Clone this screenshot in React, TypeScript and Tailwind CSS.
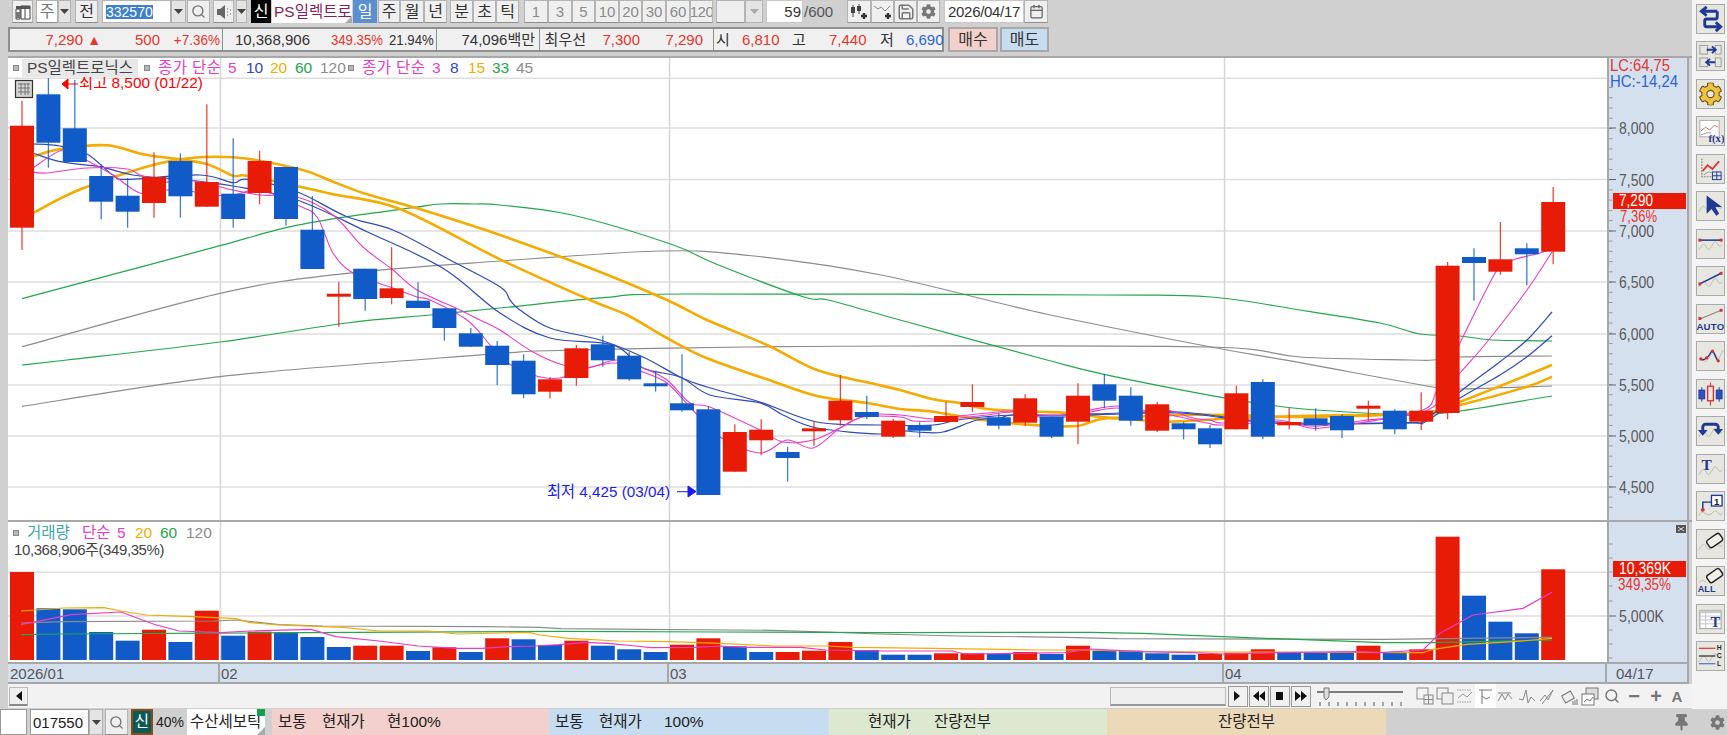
import React from "react";
import { Search, Save, Calendar } from "lucide-react";
import { FaCog, FaThumbtack } from "react-icons/fa";

type C = [number, number, number, number, "r" | "b"];
const candles: C[] = [
  [125.7,227.7,100.7,250,"r"],[94.3,142.7,78,167.7,"b"],[128.3,162,80,162,"b"],[176,201.7,164,219.3,"b"],[195.7,211.7,178,227.7,"b"],
  [177,203,152.3,217.7,"r"],[161,196.3,153.3,217.7,"b"],[182,206.7,104.3,206.7,"r"],[193.7,219,138.3,227.7,"b"],[161,193,150.7,204.3,"r"],
  [167,219,167,225.7,"b"],[229.7,269,196,269,"b"],[293.7,296.7,282.3,326.7,"r"],[268.7,299,268.7,310.7,"b"],[288.3,298,247.3,304.3,"r"],
  [300.7,308,282.3,308,"b"],[308.3,328,308.3,340.7,"b"],[333.3,346.7,328,346.7,"b"],[345.7,365,341,385,"b"],[360.7,394.3,354.3,398.3,"b"],
  [379.3,391.7,377.3,398.3,"r"],[348.3,378,345,385.7,"r"],[344.3,360.3,335.7,366.7,"b"],[355.7,379.3,351.7,380.7,"b"],[383.3,385.3,370.7,391.7,"b"],
  [403.3,410.3,354.3,411.7,"b"],[409.3,495,406,495,"b"],[432,471.7,424.3,471.7,"r"],[429.7,440.3,419.3,455.3,"r"],[452,458,447,481.7,"b"],
  [428.3,430.3,421,445.7,"r"],[400.7,420.3,375,425.7,"r"],[412,417,395.7,419,"b"],[420.7,436.7,419,438,"r"],[425,430.7,422.3,437.3,"b"],
  [416,422,401.7,422,"r"],[402,407,384.3,412,"r"],[417.3,425.7,413.3,429.3,"b"],[398.3,422.7,394.3,425.7,"r"],[416.7,436.7,416.7,438,"b"],
  [395.7,421.7,383.3,444.3,"r"],[384.3,400.7,374,408.3,"b"],[395.7,420.7,387.3,425.7,"b"],[404.3,430.7,402,432,"r"],[423.3,429.3,422,439.3,"b"],
  [428.3,444.3,425,448,"b"],[393.3,429.3,385.7,429.3,"r"],[382,436.7,379.3,439.3,"b"],[422,425.3,407.7,429.3,"r"],[418.3,425.3,408.3,430.7,"b"],
  [416,430.3,414.3,438,"b"],[405.7,408,400.7,420.7,"r"],[410.7,429.3,409.3,434.3,"b"],[410.7,421.7,392.3,430,"r"],[265.7,413,262,419.3,"r"],
  [257,263,248.3,300.7,"b"],[259.3,271.7,222,274.7,"r"],[248.3,254.3,243.3,285.3,"b"],[202,251.7,187,264.3,"r"],
];
const vols: [number, "r" | "b"][] = [
  [572,"r"],[608.3,"b"],[609.3,"b"],[632,"b"],[640.7,"b"],[629.7,"r"],[642,"b"],[610.7,"r"],[635.7,"b"],[631.7,"r"],
  [632,"b"],[637,"b"],[647,"b"],[645.7,"r"],[645.7,"r"],[651,"b"],[647.3,"r"],[652,"b"],[638.3,"r"],[639.3,"b"],
  [645,"b"],[640.7,"r"],[645.7,"b"],[649.3,"b"],[652,"b"],[644.7,"r"],[638.3,"r"],[646.3,"b"],[652,"b"],[652,"r"],
  [650.7,"r"],[642,"r"],[650,"b"],[654.7,"b"],[654.7,"b"],[653.3,"r"],[653.3,"r"],[654,"b"],[652,"r"],[654,"b"],
  [645.7,"r"],[650.7,"b"],[650.7,"b"],[653.3,"b"],[654.7,"b"],[654,"r"],[652.7,"r"],[649.3,"r"],[652.7,"b"],[652.7,"b"],
  [652.7,"b"],[645.7,"r"],[652.7,"b"],[649.3,"r"],[536.7,"r"],[595.7,"b"],[621.7,"b"],[633.3,"b"],[569.3,"r"],
];
const cx = (i: number) => 22 + 26.4 * i;
const RED = "#e81b07";
const BLUE = "#115bc8";
const MAG = "#e83cc8";
const IND = "#2f49b8";
const ORG = "#f5ab00";
const GRN = "#22a84a";
const GRY = "#8c8c8c";

const pL = (a: number[][]) => a.map((p) => p.join(",")).join(" ");
const smooth = (p: number[][]) => {
  let d = `M${p[0][0]} ${p[0][1]}`;
  for (let i = 0; i < p.length - 1; i++) {
    const a = p[i - 1] || p[i];
    const b = p[i];
    const c = p[i + 1];
    const e = p[i + 2] || c;
    d += `C${(b[0] + (c[0] - a[0]) / 6).toFixed(1)} ${(b[1] + (c[1] - a[1]) / 6).toFixed(1)} ${(c[0] - (e[0] - b[0]) / 6).toFixed(1)} ${(c[1] - (e[1] - b[1]) / 6).toFixed(1)} ${c[0]} ${c[1]}`;
  }
  return d;
};

const priceLines: { c: string; w: number; p: number[][] }[] = [
  { c: GRY, w: 1.2, p: [[22,346.7],[220,293.3],[347,273.3],[500,261],[661,251],[749,255.5],[881,275],[1046,314],[1211,347],[1300,362.7],[1433,387],[1460,389],[1552,386]] },
  { c: GRY, w: 1.2, p: [[22,406.4],[220,376.7],[440,358],[510,352.7],[537,351],[640,348.7],[747,347],[900,346],[1211,347],[1300,357],[1410,360],[1433,360],[1460,357],[1552,356]] },
  { c: GRN, w: 1.2, p: [[22,298.7],[127,270.7],[220,245.7],[286,227.7],[347,216.7],[413,207.7],[440,204],[473,204],[500,205],[572,215],[672,244.5],[716,264],[804,297],[828,300],[900,320],[1047,360],[1104,374.3],[1223,397.7],[1277,406],[1317,410],[1383,414],[1420,415],[1460,411],[1552,396]] },
  { c: GRN, w: 1.2, p: [[22,365],[67,360],[220,342],[347,323],[430,315],[500,308],[606,297.4],[683,294],[1101,295],[1211,297],[1300,310],[1380,323],[1420,334],[1460,336],[1493,340],[1552,341]] },
  { c: ORG, w: 2.6, p: [[33,156.7],[60,149],[107,145.3],[147,155],[203,163],[233,175.7],[247,175.7],[300,186.7],[333,194.3],[400,209],[500,259.3],[590,300],[627,315],[667,338],[707,358.3],[767,379.3],[817,396],[867,403],[900,409],[933,411.7],[983,420],[1033,425],[1077,426],[1107,418.3],[1167,421.7],[1233,418.3],[1300,416],[1420,413],[1460,401.7],[1552,365]] },
  { c: ORG, w: 2.6, p: [[33,213],[83,188.3],[167,161.7],[233,157.3],[300,169.3],[333,181.7],[367,194.3],[417,208.3],[500,235],[590,268],[667,300],[707,320],[767,345],[817,370],[867,382.3],[900,390],[933,399.3],[960,403],[990,409.3],[1040,411.7],[1067,413],[1113,417.7],[1167,415],[1233,415],[1300,417],[1420,413],[1460,405],[1527,386.7],[1552,376.7]] },
  { c: IND, w: 1.2, p: [[33,144],[60,146],[87,154],[113,175],[127,179.3],[200,175],[233,182.7],[247,179.3],[297,191.7],[347,216.7],[393,230],[450,260],[500,286.7],[510,300],[520,310],[550,328],[600,340],[643,357],[682,378],[707,387],[760,402],[817,422],[880,425],[933,425],[957,420],[983,417],[1013,415],[1060,415],[1120,413],[1180,412],[1250,420],[1300,423],[1410,422.7],[1425,420],[1460,391.7],[1500,361.7],[1527,340],[1552,312]] },
  { c: IND, w: 1.2, p: [[33,153],[60,161.7],[100,166.7],[133,175],[187,180],[233,186],[297,200],[367,231.7],[443,268.3],[500,313],[550,338],[613,345],[643,368],[680,377],[710,395],[760,403],[783,415],[817,428],[880,434],[900,430.7],[917,432],[943,432],[977,420],[1000,418],[1013,415],[1060,416],[1120,414],[1180,413],[1250,421],[1300,424],[1410,423],[1425,422],[1460,398],[1500,375],[1527,356.7],[1552,335.7]] },
  { c: MAG, w: 1.1, p: [[33,168],[63,150],[86,160],[113,175],[140,193],[165,190],[190,191],[207,195],[233,195],[260,190],[297,205],[317,217],[333,253],[353,273],[390,287],[417,297],[430,300],[467,320],[490,345],[500,358],[533,375],[560,378],[587,368],[617,363],[643,372],[667,383],[690,407],[720,437],[760,453],[787,440],[813,448],[840,428],[863,417],[900,417],[913,421],[933,421],[960,418],[987,415],[1013,412],[1040,417],[1067,417],[1090,412],[1117,408],[1143,412],[1167,410],[1193,418],[1210,420],[1223,423],[1277,420],[1310,428],[1330,427],[1360,423],[1423,410],[1437,390],[1460,343],[1497,270],[1513,260],[1540,253],[1552,248]] },
  { c: MAG, w: 1.1, p: [[33,172],[47,173],[87,168],[127,169],[140,175],[165,182],[190,180],[233,190],[260,195],[297,197],[333,215],[363,247],[393,270],[417,290],[460,310],[480,320],[500,330],[533,352],[563,365],[587,368],[617,360],[643,368],[667,380],[690,403],[710,407],[760,430],[783,442],[813,440],[840,428],[867,415],[900,415],[933,419],[960,416],[987,413],[1013,411],[1040,415],[1067,415],[1090,410],[1117,406],[1143,410],[1180,417],[1207,423],[1223,425],[1277,422],[1310,426],[1330,425],[1360,421],[1428,410],[1460,373],[1487,342],[1527,290],[1552,252]] },
];
const volLines: { c: string; p: number[][] }[] = [
  { c: GRY, p: [[21,623],[64,621.7],[214,621],[236,620],[279,624.7],[323,626],[484,626.7],[540,627.3],[561,628.7],[642,629.3],[772,630.3],[827,632],[879,634],[958,636],[1065,637.3],[1117,638.7],[1383,639.3],[1552,637.3]] },
  { c: GRN, p: [[21,634.7],[61,634],[557,631.3],[719,632],[879,632.7],[1090,632.3],[1143,633.3],[1197,635.7],[1303,639.7],[1383,642.7],[1433,642.7],[1552,640]] },
  { c: ORG, p: [[21,611],[64,608],[104,607.7],[121,611],[146,615],[193,616.7],[236,618.7],[250,622.7],[279,625],[343,627.3],[379,631],[429,631],[457,634],[529,632.3],[540,635],[569,638.3],[617,641],[669,641.7],[720,643.3],[774,646],[826,646],[854,647.3],[933,648.3],[1038,650],[1090,650],[1143,651.7],[1223,652],[1423,652.7],[1433,649.3],[1467,644.3],[1513,641.7],[1552,638.3]] },
  { c: MAG, p: [[21,624.3],[36,621.7],[71,614.7],[121,612],[154,624.3],[179,631],[221,632.7],[250,631],[311,629.3],[336,636.7],[379,641],[418,646],[457,648.3],[482,648.3],[507,646.7],[536,646],[559,644.7],[586,642.3],[608,643.3],[636,646],[651,647.7],[694,647.3],[720,646],[747,647.3],[801,647.3],[826,650],[879,651],[952,651],[965,654],[1065,652.7],[1090,649],[1143,651.7],[1193,652.7],[1223,654],[1277,652.7],[1357,651.7],[1380,652.7],[1423,650],[1440,633.3],[1473,615],[1523,608.3],[1552,592.3]] },
];

const btn = "flex shrink-0 items-center justify-center border border-[#b4b4b4] border-b-[#8f8f8f] bg-[#efefef] h-full";
const dd = "flex shrink-0 items-center justify-center border border-[#b4b4b4] bg-[#e4e4e4] h-full";
const Caret = ({ c = "#444" }: { c?: string }) => (
  <svg width="9" height="5" viewBox="0 0 9 5"><path d="M0 0h9L4.5 5z" fill={c} /></svg>
);

const T = ({ x, y, w, fill, children }: { x: number; y: number; w: number; fill: string; children: string }) => (
  <text x={x} y={y} fontSize="16" fill={fill} textLength={w} lengthAdjust="spacingAndGlyphs">{children}</text>
);

const Axis = ({ ticks, labels }: { ticks: number[]; labels: [string, number, number][] }) => (
  <g>
    {ticks.map((y, i) => (
      <line key={i} x1="0" x2="3.5" y1={y} y2={y} stroke="#9a9a9a" strokeWidth="1" />
    ))}
    {labels.map(([t, y, w]) => (
      <g key={t}>
        <line x1="0" x2="7" y1={y} y2={y} stroke="#666" strokeWidth="1" />
        <T x={10} y={y + 6} w={w} fill="#5a5a5a">{t}</T>
      </g>
    ))}
  </g>
);

const Wave = () => <path d="M2 20c3-5 5-8 7-4s3 5 5 2 4-8 6-6 3 7 6 3" fill="none" stroke="#b8b8b0" strokeWidth="1" />;
const NAVY = "#1f3a93";
const tools: React.ReactNode[] = [
  <g key="1" fill="none" stroke={NAVY} strokeWidth="3">
    <path d="M21 6H6M10 1.500 4.500 6l5.500 4.500" />
    <path d="M21 6v6a2 2 0 0 1-2 2H10a2 2 0 0 0-2 2v4a2 2 0 0 0 2 2h14M19.500 17.500l5 4.500-5 4.500" />
  </g>,
  <g key="2">
    <g fill="#e6e6e0" stroke="#9a9a9a">
      <rect x="3" y="3" width="8" height="9" /><rect x="19" y="3" width="6" height="9" /><rect x="3" y="16" width="8" height="9" /><rect x="19" y="16" width="6" height="9" />
    </g>
    <path d="M10 7.500h9m-3.500-3.500 4 3.500-4 3.500M19 20.500h-9m3.500-3.500-4 3.500 4 3.500" stroke={NAVY} strokeWidth="2" fill="none" />
  </g>,
  <FaCog key="3" x="2" y="2" size={24} color="#f2c23c" stroke="#5e5326" strokeWidth={24} />,
  <g key="4">
    <rect x="3" y="3" width="20" height="17" fill="#fff" stroke="#aaa" />
    <path d="M4 14l5-4 4 3 5-5 4 2" fill="none" stroke="#e86060" strokeWidth="1" />
    <path d="M4 18l6-2 5 0" fill="none" stroke="#999" />
    <text x="12" y="25" fontSize="11" fontWeight="700" fill={NAVY} fontFamily="Liberation Serif">f(x)</text>
  </g>,
  <g key="5">
    <path d="M5 3v19h19" fill="none" stroke="#888" strokeWidth="1.200" strokeDasharray="2 1" />
    <path d="M6 16l5-6 5 4 7-8" fill="none" stroke="#d83030" strokeWidth="1.800" />
    <path d="M7 20l5-3 4 1" fill="none" stroke="#999" />
    <rect x="16" y="17" width="9" height="8" fill="#dde6f5" stroke={NAVY} /><path d="M20.500 17v8M16 21h9" stroke={NAVY} />
  </g>,
  <g key="6"><Wave /><path d="M10 3v19l5-5 5 7 3-2-4-7h7z" fill={NAVY} /></g>,
  <g key="7"><Wave /><path d="M3 10h22" stroke={NAVY} strokeWidth="1.600" /><rect x="1.500" y="8.500" width="3" height="3" fill="#d83030" /><rect x="23.500" y="8.500" width="3" height="3" fill="#d83030" /></g>,
  <g key="8"><Wave /><path d="M3 17L25 6" stroke={NAVY} strokeWidth="1.600" /><rect x="1.500" y="15.500" width="3" height="3" fill="#d83030" /><rect x="23.500" y="4.500" width="3" height="3" fill="#d83030" /></g>,
  <g key="9"><path d="M3 14l22-9" stroke="#888" strokeWidth="1.200" /><rect x="1.500" y="12" width="3" height="3" fill="#d83030" /><rect x="23.500" y="3.500" width="3" height="3" fill="#d83030" /><text x="14" y="25" fontSize="10" fontWeight="700" textAnchor="middle" fill={NAVY} letterSpacing="0.3">AUTO</text></g>,
  <g key="10"><path d="M3 17l6 3 4-5 4-6 5 9 5-10" fill="none" stroke="#bbb" /><path d="M4 17c3 3 5-1 7-2s3-6 5-6 3 8 6 10" fill="none" stroke={NAVY} strokeWidth="1.500" />{[[4,17],[10,16],[16,9],[22,19]].map(([x,y])=><circle key={x} cx={x} cy={y} r="1.700" fill="#d83030" />)}</g>,
  <g key="11"><path d="M5 7v15M23 7v15" stroke={NAVY} /><path d="M14 2v24" stroke="#d83030" /><rect x="2" y="10" width="6" height="9" fill="#3050c8" stroke={NAVY} /><rect x="20" y="10" width="6" height="9" fill="#3050c8" stroke={NAVY} /><rect x="11" y="6" width="6" height="15" fill="#f0e8e0" stroke="#d83030" strokeWidth="1.400" /></g>,
  <g key="12"><Wave /><path d="M6 16V10a3 3 0 0 1 3-3h10a3 3 0 0 1 3 3v4" fill="none" stroke={NAVY} strokeWidth="3" /><path d="M1 13h10l-5 6zM17 12h10l-5 6z" fill={NAVY} /></g>,
  <g key="13"><Wave /><text x="10" y="15" fontSize="16" fontWeight="700" textAnchor="middle" fill={NAVY} fontFamily="Liberation Serif">T</text></g>,
  <g key="14"><path d="M2 24c3-6 5-3 7-2s4 2 6 0 4-5 7-1 3 2 4 0" fill="none" stroke="#b8b8b0" /><path d="M6 18v-8h9" fill="none" stroke={NAVY} strokeWidth="1.500" /><circle cx="6" cy="18" r="2" fill="#d83030" /><rect x="15" y="3" width="11" height="11" fill="#fff" stroke={NAVY} strokeWidth="1.400" /><text x="20.500" y="12.500" fontSize="10" fontWeight="700" textAnchor="middle" fill="#222">1</text></g>,
  <g key="15"><Wave /><rect x="10" y="6" width="16" height="9" rx="2.500" transform="rotate(-35 18 10)" fill="#f2f0e8" stroke="#222" strokeWidth="1.500" /></g>,
  <g key="16"><rect x="10" y="4" width="16" height="9" rx="2.500" transform="rotate(-35 18 8)" fill="#f2f0e8" stroke="#222" strokeWidth="1.500" /><path d="M2 16c3-4 5-2 7-1" fill="none" stroke="#b8b8b0" /><text x="10" y="25" fontSize="9.500" fontWeight="700" textAnchor="middle" fill={NAVY}>ALL</text></g>,
  <g key="17"><rect x="3" y="5" width="22" height="19" fill="#fff" stroke="#999" /><path d="M3 5h22v3H3z" fill="#c8c8c8" /><path d="M3 11h22M3 15h22M3 19h22M9 8v16" stroke="#c4c4c4" /><text x="19" y="22" fontSize="15" fontWeight="700" textAnchor="middle" fill={NAVY} fontFamily="Liberation Serif">T</text></g>,
  <g key="18"><Wave /><path d="M2 6h17" stroke="#d83030" strokeWidth="1.200" /><path d="M2 14h17" stroke="#222" strokeWidth="1.200" /><path d="M2 22h17" stroke="#3a70d0" strokeWidth="1.200" /><text x="23" y="8" fontSize="7" fontWeight="700" textAnchor="middle" fill="#222">H</text><text x="23" y="16" fontSize="7" fontWeight="700" textAnchor="middle" fill="#222">C</text><text x="23" y="24" fontSize="7" fontWeight="700" textAnchor="middle" fill="#222">L</text></g>,
];

const Sq = () => <span className="inline-block size-[6px] shrink-0 border border-[#888] bg-[#b8b8b8]" />;

const tbIcon = "flex shrink-0 items-center justify-center w-[20px] h-[24px] text-[#777]";
const miniIcons: React.ReactNode[] = [
  <g key="a" fill="none" stroke="#888"><rect x="1" y="1" width="11" height="11" /><rect x="8" y="8" width="9" height="9" fill="#eee" /><path d="M12.500 8v9M8 12.500h9" /></g>,
  <g key="b" fill="none" stroke="#888"><rect x="1" y="1" width="11" height="11" /><rect x="6" y="6" width="11" height="11" fill="#eee" /></g>,
  <g key="c" fill="none" stroke="#999" strokeDasharray="1.500 1"><path d="M1 3h14M1 15h14" /><path d="M2 11l5-4 4 3 5-5" strokeDasharray="none" /></g>,
  <g key="d" fill="none" stroke="#777"><path d="M3 3h13M6 3v14M6 9l4 3 4-2" /></g>,
  <g key="e" fill="none" stroke="#888"><path d="M1 6h13M1 14l4-7 3 6 3-6 4 5" /></g>,
  <g key="f" fill="none" stroke="#888"><path d="M1 12l4 1 3-10 2 13 3-6 4 4" /></g>,
  <g key="g" fill="none" stroke="#888"><path d="M1 14l5-6 3 5 5-10M3 17l11-14" /></g>,
  <g key="h" fill="none" stroke="#777"><rect x="3" y="6" width="10" height="8" transform="rotate(-30 8 10)" fill="#eee" /><path d="M13 14v4M15 13v5M17 12v6" /></g>,
  <g key="i" fill="none" stroke="#777"><rect x="5" y="1" width="12" height="11" fill="#ddd" /><rect x="1" y="7" width="12" height="11" fill="#fff" /><path d="M3 15l3-3 3 2 3-4" /></g>,
];

export default function App() {
  return (
    <div className="flex h-[735px] w-[1727px] flex-col overflow-hidden bg-[#d0d0d0] font-['Liberation_Sans','Noto_Sans_CJK_KR',sans-serif] text-[#333]">
      <div className="flex h-[709px] shrink-0">
        {/* main column */}
        <div className="flex w-[1692px] shrink-0 flex-col">
          {/* row 1 */}
          <div className="flex h-[23px] shrink-0 items-stretch pl-[12px] text-[16px] leading-none">
            <div className={btn + " w-[21px]"}>
              <svg width="16" height="16" viewBox="0 0 16 16"><path d="M1 5h4v10H1zM6 2h9v13H6z" fill="#fff" stroke="#444" /><path d="M1 2h14v3H1z" fill="#555" /><path d="M1 8h4v6H1z" fill="#777" /><path d="M10 5v10" stroke="#444" /></svg>
            </div>
            <div className={btn + " ml-[3px] w-[22px] bg-white text-[#777]"}>주</div>
            <div className={dd + " w-[13px]"}><Caret /></div>
            <div className={btn + " ml-[4px] w-[23px]"}>전</div>
            <div className="ml-[4px] flex h-full w-[69px] shrink-0 items-center border border-[#b4b4b4] bg-white pl-[3px]">
              <span className="bg-[#3d7fd0] text-[14px] text-white">332570</span>
            </div>
            <div className={dd + " w-[15px]"}><Caret /></div>
            <div className={btn + " ml-[1px] w-[23px]"}><Search size={15} color="#777" strokeWidth={2.2} /></div>
            <div className={btn + " ml-[3px] w-[21px]"}>
              <svg width="16" height="14" viewBox="0 0 16 14"><path d="M1 4h3l5-4v14L4 10H1z" fill="#666" /><path d="M11 4h1M11 7h1M11 10h1M14 5h1M14 9h1" stroke="#666" /></svg>
            </div>
            <div className={dd + " ml-[2px] w-[11px]"}><Caret /></div>
            <div className="ml-[4px] flex h-full w-[20px] shrink-0 items-center justify-center bg-black text-white">신</div>
            <div className="relative ml-[1px] flex h-full w-[80px] shrink-0 items-center overflow-hidden whitespace-nowrap bg-white pl-[2px] text-[15.500px] text-[#8a1a5e]">
              PS일렉트로
              <span className="absolute bottom-0 right-0 size-0 border-b-[7px] border-l-[7px] border-b-[#aaa] border-l-transparent" />
            </div>
            <div className="ml-[1px] flex h-full w-[24px] shrink-0 items-center justify-center bg-[#5b8fcf] text-white">일</div>
            <div className={btn + " ml-[1px] w-[22px]"}>주</div>
            <div className={btn + " w-[24px]"}>월</div>
            <div className={btn + " w-[23px]"}>년</div>
            <div className={btn + " ml-[3px] w-[23px]"}>분</div>
            <div className={btn + " w-[23px]"}>초</div>
            <div className={btn + " w-[23px]"}>틱</div>
            <div className="ml-[5px] flex h-full text-[15px] text-[#8a8a8a]">
              <div className={btn + " w-[24px]"}>1</div>
              <div className={btn + " w-[24px]"}>3</div>
              <div className={btn + " w-[23px]"}>5</div>
              <div className={btn + " w-[24px]"}>10</div>
              <div className={btn + " w-[23px]"}>20</div>
              <div className={btn + " w-[24px]"}>30</div>
              <div className={btn + " w-[24px]"}>60</div>
              <div className={btn + " w-[23px] overflow-hidden tracking-[-0.5px]"}>120</div>
            </div>
            <div className={btn + " ml-[3px] w-[29px]"} />
            <div className={dd + " w-[18px]"}><Caret c="#aaa" /></div>
            <div className="ml-[3px] flex h-full w-[37px] shrink-0 items-center justify-end border border-[#c8c8c8] bg-white pr-[1px] text-[15px]">59</div>
            <div className="flex w-[44px] shrink-0 items-center pl-[1px] text-[15px] text-[#555]">/600</div>
            <div className={btn + " w-[24px]"}>
              <svg width="18" height="16" viewBox="0 0 18 16" fill="#444"><path d="M3 1v12M9 0v10" stroke="#444" /><rect x="1" y="3" width="4" height="6" /><rect x="7" y="2" width="4" height="5" /><path d="M14 9v6M11 12h6" stroke="#333" strokeWidth="2.400" /></svg>
            </div>
            <div className={btn + " w-[23px]"}>
              <svg width="18" height="16" viewBox="0 0 18 16" fill="none"><path d="M0 2l4 3 3-2 4 4 5-5" stroke="#888" /><path d="M14 9v6M11 12h6" stroke="#333" strokeWidth="2.400" /></svg>
            </div>
            <div className={btn + " w-[23px]"}><Save size={18} color="#777" strokeWidth={2} /></div>
            <div className={btn + " w-[23px]"}><FaCog size={15} color="#777" /></div>
            <div className="ml-[4px] flex h-full w-[80px] shrink-0 items-center border border-[#c8c8c8] bg-white pl-[3px] text-[15px] tracking-[-0.3px]">2026/04/17</div>
            <div className={btn + " w-[24px]"}><Calendar size={15} color="#666" strokeWidth={2} /></div>
          </div>

          {/* row 2 */}
          <div className="ml-[8px] mt-[4px] flex h-[25px] shrink-0 text-[15px] leading-none">
            <div className="flex h-full w-[936px] items-stretch border-2 border-[#8f8f8f] bg-[#f0f0f0]">
              <div className="flex w-[213px] shrink-0 items-center border-r border-[#8f8f8f] text-[#e8352a]">
                <span className="w-[73px] text-right">7,290</span>
                <span className="w-[18px] text-right text-[14px]">▲</span>
                <span className="w-[59px] text-right">500</span>
                <span className="w-[60px] origin-right scale-x-[.9] whitespace-nowrap text-right">+7.36%</span>
              </div>
              <div className="flex w-[214px] shrink-0 items-center border-r border-[#8f8f8f]">
                <span className="w-[87px] text-right">10,368,906</span>
                <span className="w-[73px] origin-right scale-x-[.88] whitespace-nowrap text-right text-[#e8352a]">349.35%</span>
                <span className="w-[50px] origin-right scale-x-[.88] whitespace-nowrap text-right">21.94%</span>
              </div>
              <div className="flex w-[103px] shrink-0 items-center border-r border-[#8f8f8f]">
                <span className="w-[98px] whitespace-nowrap text-right">74,096백만</span>
              </div>
              <div className="flex w-[174px] shrink-0 items-center border-r border-[#8f8f8f]">
                <span className="w-[46px] whitespace-nowrap text-right">최우선</span>
                <span className="w-[54px] text-right text-[#e8352a]">7,300</span>
                <span className="w-[63px] text-right text-[#e8352a]">7,290</span>
              </div>
              <div className="flex flex-1 items-center pl-[2px]">
                <span className="w-[26px]">시</span>
                <span className="w-[37px] text-right text-[#e8352a]">6,810</span>
                <span className="w-[50px] pl-[13px]">고</span>
                <span className="w-[37px] text-right text-[#e8352a]">7,440</span>
                <span className="w-[40px] pl-[14px]">저</span>
                <span className="w-[36px] text-right text-[#2b63d8]">6,690</span>
              </div>
            </div>
            <div className="ml-[4px] flex h-full w-[50px] items-center justify-center border-2 border-[#a8a8a8] bg-[#f3d0cb] text-[16px]">매수</div>
            <div className="ml-[2px] flex h-full w-[49px] items-center justify-center border-2 border-[#a8a8a8] bg-[#c6dcf0] text-[16px]">매도</div>
          </div>

          {/* price pane */}
          <div className="ml-[8px] mt-[4px] flex h-[464px] shrink-0 border-t-2 border-[#a8a8a8]">
            <div className="relative w-[1599px] shrink-0 bg-white">
              <svg width="1599" height="462" viewBox="8 58 1599 462" className="block">
                {[78.3, 128, 179.5, 231, 282, 334, 385, 436, 487].map((y) => (
                  <line key={y} x1="8" x2="1607" y1={y} y2={y} stroke="#dedede" strokeWidth="1.500" />
                ))}
                {[220.5, 669.5, 1224.5].map((x) => (
                  <line key={x} x1={x} x2={x} y1="58" y2="520" stroke="#d6d6d6" strokeWidth="1.500" />
                ))}
                {priceLines.map((l, i) => (
                  <path key={i} d={smooth(l.p)} fill="none" stroke={l.c} strokeWidth={l.w} />
                ))}
                {candles.map(([t, b, wt, wb, k], i) => (
                  <g key={i}>
                    <line x1={cx(i)} x2={cx(i)} y1={wt} y2={wb} stroke={k === "r" ? RED : BLUE} strokeWidth="1.300" opacity="0.8" />
                    <rect x={cx(i) - 12} y={t} width="24" height={Math.max(b - t, 3)} fill={k === "r" ? RED : BLUE} />
                  </g>
                ))}
                <path d="M62 84l6-5v10zM68 84h10" fill="#f00" stroke="#f00" />
                <text x="79" y="88" fontSize="15.500" fill="#f00" textLength="124" lengthAdjust="spacingAndGlyphs">최고 8,500 (01/22)</text>
                <path d="M677 491.700h11M688 486v11l8-5.500z" fill="#1a1af0" stroke="#1a1af0" />
                <text x="547" y="497" fontSize="15.500" fill="#1a1af0" textLength="123" lengthAdjust="spacingAndGlyphs">최저 4,425 (03/04)</text>
                <g>
                  <rect x="15.500" y="80.500" width="17" height="17" fill="#d4d4d4" stroke="#333" strokeWidth="1.200" />
                  <path d="M18 84h12M18 88h12M18 92h12M21 83v12M25 83v12M28 83v12" stroke="#777" />
                </g>
              </svg>
              {/* legend */}
              <div className="absolute left-[5px] top-[1px] flex h-[18px] items-center whitespace-nowrap text-[15.500px] leading-none">
                <Sq />
                <span className="ml-[3px] flex h-[18px] w-[116px] items-center justify-center bg-[#e8e8e8] text-[#444]">PS일렉트로닉스</span>
                <span className="ml-[6px] flex"><Sq /></span>
                <span className="ml-[8px] w-[70px] tracking-[0.4px] text-[#e83cc8]">종가 단순</span>
                <span className="w-[18px] text-[#e83cc8]">5</span>
                <span className="w-[24px] text-[#2f49b8]">10</span>
                <span className="w-[25px] text-[#f5ab00]">20</span>
                <span className="w-[25px] text-[#22a84a]">60</span>
                <span className="w-[28px] text-[#8c8c8c]">120</span>
                <Sq />
                <span className="ml-[8px] w-[70px] tracking-[0.4px] text-[#e83cc8]">종가 단순</span>
                <span className="w-[18px] text-[#e83cc8]">3</span>
                <span className="w-[18px] text-[#2f49b8]">8</span>
                <span className="w-[24px] text-[#f5ab00]">15</span>
                <span className="w-[24px] text-[#22a84a]">33</span>
                <span className="text-[#8c8c8c]">45</span>
              </div>
            </div>
            <div className="relative w-[82px] shrink-0 border-x-2 border-[#a8a8a8] bg-[#d5e0ef]">
              <svg width="78" height="462" viewBox="0 58 78 462" className="block">
                <Axis
                  ticks={Array.from({ length: 43 }, (_, i) => 87.500 + i * 10.240).filter((y) => y < 515)}
                  labels={[["8,000", 128, 35], ["7,500", 179.5, 35], ["7,000", 231, 35], ["6,500", 282, 35], ["6,000", 334, 35], ["5,500", 385, 35], ["5,000", 436, 35], ["4,500", 487, 35]]}
                />
                <T x={1} y={71} w={60} fill="#e8352a">LC:64,75</T>
                <T x={1} y={87} w={68} fill="#2b63d8">HC:-14,24</T>
                <rect x="4" y="193" width="73" height="16" fill={RED} />
                <T x={10} y={206} w={34} fill="#fff">7,290</T>
                <T x={11} y={222} w={37} fill="#e8352a">7,36%</T>
              </svg>
            </div>
          </div>

          {/* volume pane */}
          <div className="ml-[8px] flex h-[142px] shrink-0 border-t-2 border-[#a8a8a8]">
            <div className="relative w-[1599px] shrink-0 bg-white">
              <svg width="1599" height="140" viewBox="8 522 1599 140" className="block">
                {[572.3, 616].map((y) => (
                  <line key={y} x1="8" x2="1607" y1={y} y2={y} stroke="#dedede" strokeWidth="1.500" />
                ))}
                {[220.5, 669.5, 1224.5].map((x) => (
                  <line key={x} x1={x} x2={x} y1="522" y2="660" stroke="#d6d6d6" strokeWidth="1.500" />
                ))}
                {vols.map(([t, k], i) => (
                  <rect key={i} x={cx(i) - 12} y={t} width="24" height={660 - t} fill={k === "r" ? RED : BLUE} />
                ))}
                {volLines.map((l, i) => (
                  <polyline key={i} points={pL(l.p)} fill="none" stroke={l.c} strokeWidth="1.200" />
                ))}
              </svg>
              <div className="absolute left-[5px] top-[2px] flex flex-col whitespace-nowrap text-[15.500px] leading-[17px]">
                <div className="flex items-center">
                  <Sq />
                  <span className="ml-[8px] w-[55px] text-[#3aa8a8]">거래량</span>
                  <span className="w-[35px] text-[#e83cc8]">단순</span>
                  <span className="w-[18px] text-[#e83cc8]">5</span>
                  <span className="w-[25px] text-[#f5ab00]">20</span>
                  <span className="w-[26px] text-[#22a84a]">60</span>
                  <span className="text-[#8c8c8c]">120</span>
                </div>
                <div className="pl-[1px] text-[15px] tracking-[-0.4px] text-[#444]">10,368,906주(349,35%)</div>
              </div>
            </div>
            <div className="relative w-[82px] shrink-0 border-x-2 border-[#a8a8a8] bg-[#d5e0ef]">
              <svg width="78" height="140" viewBox="0 522 78 140" className="block">
                <Axis
                  ticks={[544, 558, 572, 586, 601, 630, 644, 658]}
                  labels={[["5,000K", 616, 45]]}
                />
                <rect x="4" y="561" width="73" height="16" fill={RED} />
                <T x={10} y={574} w={52} fill="#fff">10,369K</T>
                <T x={9} y={590} w={53} fill="#e8352a">349,35%</T>
                <rect x="67" y="525" width="10" height="8" fill="#555" />
                <path d="M69 527l6 4M75 527l-6 4" stroke="#ddd" />
              </svg>
            </div>
          </div>

          {/* x axis */}
          <div className="ml-[8px] flex h-[22px] w-[1681px] shrink-0 border-y-2 border-[#a8a8a8] bg-[#d5e0ef] text-[15px] leading-none text-[#555]">
            <div className="flex w-[212px] items-center border-r-2 border-[#a8a8a8] pl-[2px]">2026/01</div>
            <div className="flex w-[449px] items-center border-r-2 border-[#a8a8a8] pl-[1px]">02</div>
            <div className="flex w-[555px] items-center border-r-2 border-[#a8a8a8] pl-[1px]">03</div>
            <div className="flex w-[383px] items-center border-r-2 border-[#a8a8a8] pl-[1px]">04</div>
            <div className="flex flex-1 items-center border-r-2 border-[#a8a8a8] pl-[9px]">04/17</div>
          </div>

          {/* scroll row */}
          <div className="ml-[8px] flex h-[24px] shrink-0 items-center bg-[#f2f2f2] pl-[1px]">
            <div className="flex h-[19px] w-[19px] shrink-0 items-center justify-center border border-b-2 border-[#bbb] border-b-[#888] bg-[#efefef]">
              <svg width="6" height="10" viewBox="0 0 6 10"><path d="M6 0v10L0 5z" fill="#111" /></svg>
            </div>
            <div className="ml-[1082px] h-[19px] w-[116px] shrink-0 border border-b-2 border-[#bbb] border-b-[#999] bg-[#efefef]" />
            <div className="ml-[2px] flex h-[21px] shrink-0 items-stretch gap-[1px]">
              {[
                <path key="a" d="M3 1v10l6-5z" />,
                <path key="b" d="M7 1v10L1 6zM13 1v10L7 6z" />,
                <rect key="c" x="3" y="2" width="7" height="8" />,
                <path key="d" d="M1 1v10l6-5zM7 1v10l6-5z" />,
              ].map((p, i) => (
                <div key={i} className="flex w-[20px] items-center justify-center border border-[#999] bg-[#f0f0f0]">
                  <svg width="14" height="12" viewBox="0 0 14 12" fill="#111">{p}</svg>
                </div>
              ))}
            </div>
            <div className="relative ml-[6px] h-[22px] w-[88px] shrink-0">
              <svg width="88" height="22" viewBox="0 0 88 22">
                <path d="M0 7h86" stroke="#555" strokeWidth="1.500" />
                <path d="M7 3h5v9l-3 3-2-3z" fill="#ddd" stroke="#777" />
                {Array.from({ length: 10 }, (_, i) => <line key={i} x1={3 + i * 9} x2={3 + i * 9} y1="17" y2="21" stroke="#555" />)}
              </svg>
            </div>
            <div className="ml-[10px] flex h-[24px] shrink-0 items-center">
              {miniIcons.map((p, i) => (
                <div key={i} className={(i === 3 ? "bg-white " : "") + tbIcon + (i < 3 ? "" : " w-[21px]")}>
                  <svg width="19" height="19" viewBox="0 0 19 19">{p}</svg>
                </div>
              ))}
            </div>
            <div className="ml-[3px] flex shrink-0 items-center gap-[6px] text-[#777]">
              <Search size={16} strokeWidth={2.2} />
              <span className="w-[16px] text-center text-[20px] font-bold leading-none">−</span>
              <span className="w-[16px] text-center text-[20px] font-bold leading-none">+</span>
              <span className="w-[14px] text-center text-[15px] font-bold leading-none">A</span>
            </div>
          </div>
        </div>

        {/* right toolbar */}
        <div className="flex flex-1 flex-col bg-[#f4f4f4] pl-[4px] pt-[4px]">
          <div className="flex flex-col gap-[7.470px]">
            {tools.map((t, i) => (
              <div key={i} className="flex h-[30px] w-[29px] items-center justify-center border border-[#a9a9a9] bg-[#e8e6e0]">
                <svg width="28" height="28" viewBox="0 0 28 28">{t}</svg>
              </div>
            ))}
          </div>
        </div>
      </div>

      {/* bottom bar */}
      <div className="flex h-[26px] shrink-0 items-stretch text-[15.500px] leading-none text-[#222]">
        <div className="w-[27px] shrink-0 border border-[#999] bg-white" />
        <div className="ml-[3px] flex w-[59px] shrink-0 items-center border border-[#999] bg-white pl-[2px] text-[15px]">017550</div>
        <div className={dd + " w-[14px]"}><Caret /></div>
        <div className={btn + " ml-[2px] w-[23px]"}><Search size={15} color="#777" strokeWidth={2.2} /></div>
        <div className="ml-[3px] flex w-[22px] shrink-0 items-center justify-center border-2 border-[#8a4a1a] bg-[#0d5a55] text-white">신</div>
        <div className="flex w-[34px] shrink-0 items-center justify-center text-[14px]">40%</div>
        <div className="relative flex w-[78px] shrink-0 items-center overflow-hidden whitespace-nowrap bg-white pl-[3px]">
          수산세보틱
          <span className="absolute right-0 top-0 size-0 border-l-[8px] border-t-[7px] border-l-[#13a050] border-t-[#13a050]" />
          <span className="absolute bottom-0 right-0 size-0 border-b-[8px] border-l-[8px] border-b-[#aaa] border-l-transparent" />
        </div>
        <div className="ml-[7px] flex w-[277px] shrink-0 items-center bg-[#f3d0cb] pl-[6px]">
          <span className="w-[44px]">보통</span>
          <span className="w-[65px]">현재가</span>
          <span>현100%</span>
        </div>
        <div className="flex w-[280px] shrink-0 items-center bg-[#c6dcf0] pl-[6px]">
          <span className="w-[44px]">보통</span>
          <span className="w-[65px]">현재가</span>
          <span>100%</span>
        </div>
        <div className="flex w-[278px] shrink-0 items-center bg-[#dce8d0] pl-[39px]">
          <span className="w-[66px]">현재가</span>
          <span>잔량전부</span>
        </div>
        <div className="flex w-[279px] shrink-0 items-center justify-center bg-[#ecd9b8]">잔량전부</div>
        <div className="flex flex-1 items-center justify-end gap-[20px] pr-[2px] text-[#777]">
          <FaThumbtack size={17} />
          <FaCog size={15} />
        </div>
      </div>
    </div>
  );
}
